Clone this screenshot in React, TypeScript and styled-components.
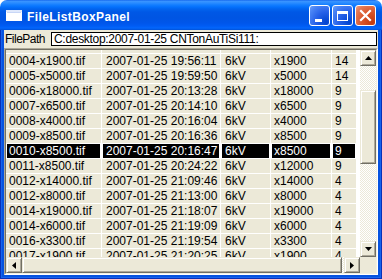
import React from 'react';
import styled, { createGlobalStyle } from 'styled-components';

const Global = createGlobalStyle`
  html, body { margin: 0; padding: 0; background: #ffffff; }
  body { font-family: "Liberation Sans", Arial, sans-serif; }
  * { box-sizing: border-box; }
`;

const Window = styled.div`
  width: 382px;
  height: 279px;
  display: flex;
  flex-direction: column;
  border-radius: 7px 7px 0 0;
  overflow: hidden;
`;

const TitleBar = styled.div`
  height: 30px;
  flex: none;
  display: flex;
  align-items: center;
  padding: 0 6px 0 6px;
  background: linear-gradient(
    to bottom,
    #0a5ce8 0px,
    #3d95ff 1px,
    #2a8cff 3px,
    #127dff 5px,
    #0470fc 7px,
    #0264ee 9px,
    #0058e6 12px,
    #0055e3 18px,
    #0056ea 23px,
    #005cf4 26px,
    #0367fc 28px,
    #0052d8 30px
  );
`;

const TitleIcon = styled.svg`
  flex: none;
  width: 16px;
  height: 16px;
  margin: 2px 5px 0 0;
`;

const TitleText = styled.div`
  flex: 1;
  color: #ffffff;
  font-weight: bold;
  font-size: 12px;
  letter-spacing: 0.4px;
  line-height: 14px;
  margin-top: 3px;
`;

const CaptionButtons = styled.div`
  display: flex;
  gap: 2px;
  margin-top: 1px;
`;

const CaptionButton = styled.div<{ $close?: boolean }>`
  width: 21px;
  height: 21px;
  border: 1px solid #ffffff;
  border-radius: 3px;
  background: ${(p) =>
    p.$close
      ? 'radial-gradient(circle at 85% 85%, #c43a0e 0%, #d9552a 45%, #e57a55 80%, #f0a287 100%)'
      : 'radial-gradient(circle at 85% 85%, #0043cf 0%, #2660e8 45%, #4a84f5 80%, #6fa0f8 100%)'};
  display: flex;
  align-items: center;
  justify-content: center;
`;

const Glyph = styled.svg`
  width: 19px;
  height: 19px;
  display: block;
`;

const Frame = styled.div`
  flex: 1;
  min-height: 0;
  display: flex;
  padding: 0 4px 4px 4px;
  background: #0653e0;
  box-shadow: inset 1px 0 #0831b8, inset -1px 0 #0831b8, inset 0 -1px #0831b8,
    inset 2px 0 #1663ec, inset -2px 0 #1663ec, inset 0 -2px #1663ec;
`;

const Client = styled.div`
  flex: 1;
  display: flex;
  flex-direction: column;
  background: #ece9d8;
  min-height: 0;
  min-width: 0;
`;

const PathRow = styled.div`
  height: 18px;
  flex: none;
  display: flex;
  align-items: flex-start;
  padding: 2px 1px 0 1px;
`;

const PathLabel = styled.div`
  width: 46px;
  font-size: 12px;
  letter-spacing: -0.5px;
  line-height: 14px;
  color: #000;
`;

const PathInput = styled.div`
  flex: 1;
  height: 14px;
  border: 1px solid #000;
  background: #fff;
  font-size: 12px;
  letter-spacing: -0.3px;
  line-height: 12px;
  padding-left: 2px;
  color: #000;
  white-space: nowrap;
  overflow: hidden;
`;

const ListOuter = styled.div`
  flex: 1;
  min-height: 0;
  display: flex;
  border: 1px solid;
  border-color: #aca899 #ffffff #ffffff #aca899;
`;

const ListInner = styled.div`
  flex: 1;
  min-height: 0;
  min-width: 0;
  display: grid;
  grid-template-columns: minmax(0, 1fr) 16px;
  grid-template-rows: minmax(0, 1fr) 16px;
  border: 1px solid;
  border-color: #716f64 #f1efe2 #f1efe2 #716f64;
`;

const Viewport = styled.div`
  overflow: hidden;
  background: #ffffff;
  min-height: 0;
`;

const Rows = styled.div`
  margin-top: -11px;
`;

const Row = styled.div`
  display: flex;
  gap: 1px;
  height: 14px;
  margin-bottom: 1px;
`;

const Cell = styled.div<{ $w: number; $pad: number; $sel?: boolean }>`
  flex: none;
  width: ${(p) => p.$w}px;
  height: 14px;
  padding-left: ${(p) => p.$pad}px;
  font-size: 12px;
  line-height: 14px;
  white-space: nowrap;
  overflow: hidden;
  background: ${(p) => (p.$sel ? '#000000' : '#ece9d8')};
  color: ${(p) => (p.$sel ? '#ffffff' : '#000000')};
  box-shadow: ${(p) => (p.$sel ? 'inset 1px 0 #ffffff, inset -1px 0 #ffffff' : 'none')};
`;

const Track = styled.div<{ $vertical?: boolean }>`
  display: flex;
  flex-direction: ${(p) => (p.$vertical ? 'column' : 'row')};
  min-height: 0;
  min-width: 0;
`;

const Groove = styled.div<{ $vertical?: boolean }>`
  flex: 1;
  min-height: 0;
  min-width: 0;
  display: flex;
  flex-direction: ${(p) => (p.$vertical ? 'column' : 'row')};
  background-color: #ece9d8;
  background-image: conic-gradient(#ffffff 25%, transparent 0 50%, #ffffff 0 75%, transparent 0);
  background-size: 2px 2px;
`;

const Bevel = styled.div`
  background: #ece9d8;
  border: 1px solid;
  border-color: #ece9d8 #716f64 #716f64 #ece9d8;
  box-shadow: inset 1px 1px #ffffff, inset -1px -1px #aca899;
  display: flex;
  align-items: center;
  justify-content: center;
  flex: none;
`;

const ArrowButton = styled(Bevel)`
  width: 16px;
  height: 16px;
`;

const VThumb = styled(Bevel)`
  height: 74px;
  margin-top: 24px;
`;

const HThumb = styled(Bevel)`
  width: 320px;
`;

const Corner = styled.div`
  background: #ece9d8;
`;

const Arrow = styled.svg`
  display: block;
`;

type Item = [string, string, string, string, string];

const items: Item[] = [
  ['', '', '', '', ''],
  ['0004-x1900.tif', '2007-01-25 19:56:11', '6kV', 'x1900', '14'],
  ['0005-x5000.tif', '2007-01-25 19:59:50', '6kV', 'x5000', '14'],
  ['0006-x18000.tif', '2007-01-25 20:13:28', '6kV', 'x18000', '9'],
  ['0007-x6500.tif', '2007-01-25 20:14:10', '6kV', 'x6500', '9'],
  ['0008-x4000.tif', '2007-01-25 20:16:04', '6kV', 'x4000', '9'],
  ['0009-x8500.tif', '2007-01-25 20:16:36', '6kV', 'x8500', '9'],
  ['0010-x8500.tif', '2007-01-25 20:16:47', '6kV', 'x8500', '9'],
  ['0011-x8500.tif', '2007-01-25 20:24:22', '6kV', 'x12000', '9'],
  ['0012-x14000.tif', '2007-01-25 21:09:46', '6kV', 'x14000', '4'],
  ['0012-x8000.tif', '2007-01-25 21:13:00', '6kV', 'x8000', '4'],
  ['0014-x19000.tif', '2007-01-25 21:18:07', '6kV', 'x19000', '4'],
  ['0014-x6000.tif', '2007-01-25 21:19:09', '6kV', 'x6000', '4'],
  ['0016-x3300.tif', '2007-01-25 21:19:54', '6kV', 'x3300', '4'],
  ['0017-x1900.tif', '2007-01-25 21:20:25', '6kV', 'x1900', '4'],
];

const columns = [
  { w: 95, pad: 3 },
  { w: 118, pad: 4 },
  { w: 49, pad: 4 },
  { w: 60, pad: 3 },
  { w: 24, pad: 3 },
];

const SELECTED = 7;

const UpArrow = () => (
  <Arrow width="7" height="4" viewBox="0 0 7 4">
    <polygon points="3.5,0 7,4 0,4" fill="#000" />
  </Arrow>
);
const DownArrow = () => (
  <Arrow width="7" height="4" viewBox="0 0 7 4">
    <polygon points="0,0 7,0 3.5,4" fill="#000" />
  </Arrow>
);
const LeftArrow = () => (
  <Arrow width="4" height="7" viewBox="0 0 4 7">
    <polygon points="4,0 4,7 0,3.5" fill="#000" />
  </Arrow>
);
const RightArrow = () => (
  <Arrow width="4" height="7" viewBox="0 0 4 7">
    <polygon points="0,0 4,3.5 0,7" fill="#000" />
  </Arrow>
);

export default function App() {
  return (
    <>
      <Global />
      <Window>
        <TitleBar>
          <TitleIcon viewBox="0 0 16 16">
            <rect x="0" y="2" width="16" height="11" fill="#ffffff" />
            <rect x="0" y="2" width="16" height="2" fill="#dfe8fb" />
            <rect x="1" y="4" width="14" height="1" fill="#c8d6f6" />
          </TitleIcon>
          <TitleText>FileListBoxPanel</TitleText>
          <CaptionButtons>
            <CaptionButton>
              <Glyph viewBox="0 0 19 19">
                <rect x="5" y="13" width="7" height="3" fill="#ffffff" />
              </Glyph>
            </CaptionButton>
            <CaptionButton>
              <Glyph viewBox="0 0 19 19">
                <rect x="4.5" y="5.5" width="10" height="9" fill="none" stroke="#ffffff" strokeWidth="1" />
                <rect x="4" y="5" width="11" height="3" fill="#ffffff" />
              </Glyph>
            </CaptionButton>
            <CaptionButton $close>
              <Glyph viewBox="0 0 19 19">
                <path d="M5 5 L14 14 M14 5 L5 14" stroke="#ffffff" strokeWidth="2.2" strokeLinecap="square" />
              </Glyph>
            </CaptionButton>
          </CaptionButtons>
        </TitleBar>
        <Frame>
          <Client>
            <PathRow>
              <PathLabel>FilePath</PathLabel>
              <PathInput>C:desktop:2007-01-25 CNTonAuTiSi111:</PathInput>
            </PathRow>
            <ListOuter>
              <ListInner>
                <Viewport>
                  <Rows>
                    {items.map((item, r) => (
                      <Row key={r}>
                        {item.map((text, c) => (
                          <Cell key={c} $w={columns[c].w} $pad={columns[c].pad} $sel={r === SELECTED}>
                            {text}
                          </Cell>
                        ))}
                      </Row>
                    ))}
                  </Rows>
                </Viewport>
                <Track $vertical>
                  <ArrowButton>
                    <UpArrow />
                  </ArrowButton>
                  <Groove $vertical>
                    <VThumb />
                  </Groove>
                  <ArrowButton>
                    <DownArrow />
                  </ArrowButton>
                </Track>
                <Track>
                  <ArrowButton>
                    <LeftArrow />
                  </ArrowButton>
                  <Groove>
                    <HThumb />
                  </Groove>
                  <ArrowButton>
                    <RightArrow />
                  </ArrowButton>
                </Track>
                <Corner />
              </ListInner>
            </ListOuter>
          </Client>
        </Frame>
      </Window>
    </>
  );
}
